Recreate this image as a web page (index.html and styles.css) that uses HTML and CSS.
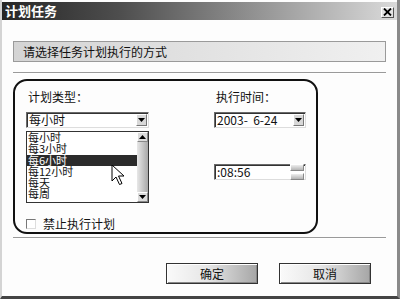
FILE: index.html
```html
<!DOCTYPE html>
<html lang="zh-CN">
  <head>
    <meta charset="UTF-8" />
    <title>计划任务</title>
    <link rel="stylesheet" href="styles.css">
  </head>
  <body>
    <div class="window">
      <div class="titlebar">
        <span class="title">计划任务</span>
        <span class="close-btn">
          <svg width="9" height="8" viewBox="0 0 9 8"><path d="M1 0.5 L8 7.5 M8 0.5 L1 7.5" stroke="#000" stroke-width="1.8"/></svg>
        </span>
      </div>

      <div class="content">
        <div class="prompt">请选择任务计划执行的方式</div>
        <div class="rule"></div>

        <div class="frame">
          <div class="frame-row">
            <div class="col-left">
              <div class="label">计划类型：</div>
              <div class="combo">
                <span class="combo-text">每小时</span>
                <span class="combo-btn">
                  <svg width="7" height="4" viewBox="0 0 7 4"><path d="M0 0 H7 L3.5 4 Z" fill="#000"/></svg>
                </span>
              </div>
              <div class="listbox">
                <ul class="items">
                  <li>每小时</li>
                  <li>每3小时</li>
                  <li class="selected">每6小时</li>
                  <li>每12小时</li>
                  <li>每天</li>
                  <li>每周</li>
                </ul>
                <div class="scrollbar">
                  <span class="sb-btn">
                    <svg width="7" height="4" viewBox="0 0 7 4"><path d="M0 4 H7 L3.5 0 Z" fill="#000"/></svg>
                  </span>
                  <span class="sb-track"></span>
                  <span class="sb-btn">
                    <svg width="7" height="4" viewBox="0 0 7 4"><path d="M0 0 H7 L3.5 4 Z" fill="#000"/></svg>
                  </span>
                </div>
                <!-- mouse pointer over the open list -->
                <svg class="cursor" width="14" height="22" viewBox="0 0 14 22">
                  <path d="M1 1 L1 17 L5 13 L8.5 20.5 L11 19.5 L7.5 12 L13 12 Z" fill="#fff" stroke="#000" stroke-width="1"/>
                </svg>
              </div>
            </div>

            <div class="col-right">
              <div class="label">执行时间：</div>
              <div class="combo short">
                <span class="combo-text">2003-&nbsp;&nbsp;6-24</span>
                <span class="combo-btn">
                  <svg width="7" height="4" viewBox="0 0 7 4"><path d="M0 0 H7 L3.5 4 Z" fill="#000"/></svg>
                </span>
              </div>
              <div class="combo short time">
                <span class="combo-text">:08:56</span>
                <span class="spin">
                  <span class="spin-btn"></span>
                  <span class="spin-btn"></span>
                </span>
              </div>
            </div>
          </div>

          <div class="check-row">
            <span class="checkbox"></span>
            <span>禁止执行计划</span>
          </div>
        </div>

        <div class="rule rule-bottom"></div>

        <div class="buttons">
          <button class="btn">确定</button>
          <button class="btn">取消</button>
        </div>
      </div>
    </div>
  </body>
</html>
```

FILE: styles.css
```css
body {
  margin: 0;
  font-family: "Noto Sans CJK SC", "DejaVu Sans", sans-serif;
  font-size: 12px;
  color: #111;
  background: #fff;
}

.window {
  width: 400px;
  height: 299px;
  box-sizing: border-box;
  padding-top: 2px;
  border-left: 2px solid #d4d4d4;
  border-right: 3px solid #8a8a8a;
  border-bottom: 3px solid #444;
  background: #fdfdfd;
  display: flex;
  flex-direction: column;
}

.titlebar {
  height: 18px;
  display: flex;
  align-items: center;
  justify-content: space-between;
  padding: 0 3px 0 3px;
  background: linear-gradient(to right, #262626, #4e4e4e 30%, #8a8a8a 60%, #dadada);
}

.title {
  color: #fff;
  font-weight: bold;
  font-size: 13px;
  line-height: 18px;
}

.close-btn {
  width: 13px;
  height: 11px;
  margin-top: 2px;
  box-sizing: border-box;
  background: #e4e4e4;
  border: 1px solid #555;
  border-top-color: #fff;
  border-left-color: #fff;
  display: flex;
  align-items: center;
  justify-content: center;
}

.content {
  display: flex;
  flex-direction: column;
  padding: 0 11px;
}

.prompt {
  margin-top: 21px;
  height: 21px;
  box-sizing: border-box;
  border: 1px solid #9a9a9a;
  background: linear-gradient(to right, #d4d4d4, #f0f0f0);
  padding-left: 9px;
  line-height: 19px;
}

.rule {
  margin-top: 10px;
  border-top: 1px solid #9a9a9a;
  border-bottom: 1px solid #fff;
}

.frame {
  margin-top: 5px;
  width: 305px;
  height: 155px;
  box-sizing: border-box;
  border: 2px solid #111;
  border-radius: 14px;
  padding: 9px 0 0 11px;
}

.frame-row {
  display: flex;
}

.col-left {
  width: 123px;
}

.col-right {
  margin-left: 65px;
}

.label {
  line-height: 14px;
  padding-left: 2px;
  margin-bottom: 8px;
}

.combo {
  height: 16px;
  box-sizing: border-box;
  border: 1px solid #6a6a6a;
  border-right-color: #ddd;
  border-bottom-color: #ddd;
  box-shadow: inset 1px 1px 0 #333;
  background: #fff;
  display: flex;
  align-items: center;
}

.combo.short {
  width: 92px;
}

.combo.time {
  margin-top: 36px;
}

.combo-text {
  flex: 1;
  padding-left: 2px;
  line-height: 14px;
  white-space: nowrap;
}

.combo-btn {
  width: 11px;
  height: 12px;
  margin-right: 1px;
  box-sizing: border-box;
  background: #d8d8d8;
  border: 1px solid #777;
  border-top-color: #fff;
  border-left-color: #fff;
  display: flex;
  align-items: center;
  justify-content: center;
}

.spin {
  width: 14px;
  margin-right: 1px;
  display: flex;
  flex-direction: column;
  gap: 2px;
}

.spin-btn {
  height: 5px;
  background: linear-gradient(to bottom, #eee, #b4b4b4);
  border: 1px solid #888;
  border-top-color: #fff;
  border-left-color: #fff;
}

.listbox {
  position: relative;
  margin-top: 3px;
  height: 72px;
  box-sizing: border-box;
  border: 1px solid #333;
  background: #fff;
  display: flex;
}

.items {
  flex: 1;
  list-style: none;
  margin: 0;
  padding: 0;
}

.items li {
  height: 11.3px;
  line-height: 11.3px;
  font-size: 11px;
  padding-left: 1px;
  white-space: nowrap;
}

.items li.selected {
  background: #2b2b2b;
  color: #fff;
}

.scrollbar {
  width: 11px;
  display: flex;
  flex-direction: column;
}

.sb-btn {
  height: 10px;
  box-sizing: border-box;
  background: #dcdcdc;
  border: 1px solid #888;
  border-top-color: #fff;
  border-left-color: #fff;
  display: flex;
  align-items: center;
  justify-content: center;
}

.sb-track {
  flex: 1;
  background: linear-gradient(to right, #e8e8e8, #a8a8a8);
}

.cursor {
  position: absolute;
  left: 84px;
  top: 32px;
}

.check-row {
  margin-top: 14px;
  display: flex;
  align-items: center;
  gap: 7px;
  line-height: 14px;
}

.checkbox {
  width: 10px;
  height: 10px;
  box-sizing: border-box;
  border: 1px solid #777;
  border-right-color: #ddd;
  border-bottom-color: #ddd;
  background: #fff;
}

.rule-bottom {
  margin-top: 3px;
}

.buttons {
  margin-top: 24px;
  display: flex;
  justify-content: flex-end;
  gap: 21px;
  padding-right: 15px;
}

.btn {
  width: 92px;
  height: 21px;
  border: 1px solid #333;
  box-shadow: inset 1px 1px 0 #fff, inset -1px -1px 0 #888;
  background: linear-gradient(to right, #fafafa, #e6e6e6 45%, #a6a6a6);
  font-family: "Noto Sans CJK SC", sans-serif;
  font-size: 12px;
  color: #111;
  padding: 0;
}
```
